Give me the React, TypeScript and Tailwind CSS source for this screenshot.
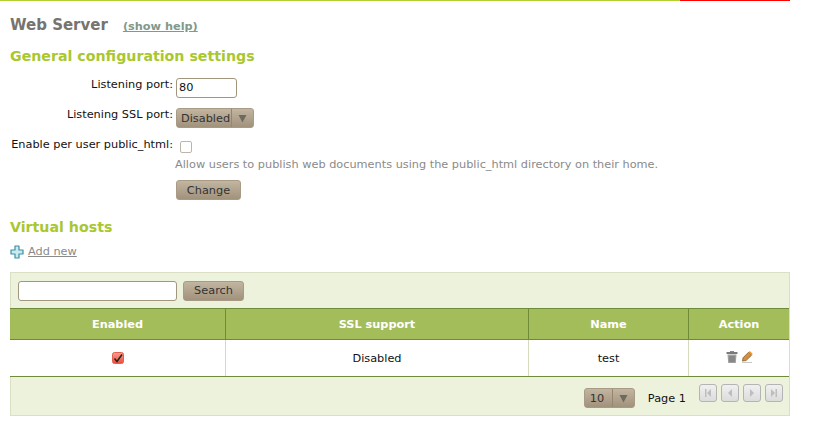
import React from "react";

const beige = "bg-gradient-to-b from-[#c2b5a1] to-[#a1927c]";

const Caret = () => (
  <svg width="9" height="9" viewBox="0 0 9 9" className="block">
    <path d="M0.5 1h8L4.5 8.5z" fill="#6f6a5e" />
  </svg>
);

const PageButton = ({ kind }: { kind: "first" | "prev" | "next" | "last" }) => (
  <div className="w-[18px] h-[18px] rounded-[3px] border border-[#b4b4b4] bg-gradient-to-b from-[#f0f0f0] to-[#dcdcdc] flex items-center justify-center">
    <svg width="8" height="10" viewBox="0 0 8 10">
      {kind === "first" && (
        <>
          <rect x="1" y="1" width="1.5" height="8" fill="#bdbdbd" />
          <path d="M7 1v8L3 5z" fill="#bdbdbd" />
        </>
      )}
      {kind === "prev" && <path d="M6 1v8L2 5z" fill="#bdbdbd" />}
      {kind === "next" && <path d="M2 1v8l4-4z" fill="#bdbdbd" />}
      {kind === "last" && (
        <>
          <rect x="5.5" y="1" width="1.5" height="8" fill="#bdbdbd" />
          <path d="M1 1v8l4-4z" fill="#bdbdbd" />
        </>
      )}
    </svg>
  </div>
);

const TrashIcon = () => (
  <svg width="12" height="12" viewBox="0 0 12 12" className="block">
    <rect x="4" y="0" width="4" height="1.5" fill="#888" />
    <rect x="0.5" y="1" width="11" height="2" rx="0.5" fill="#7a7a7a" />
    <path d="M1.5 3.5h9l-.7 8.5H2.2z" fill="#a0a0a0" />
    <path d="M4 5v6M6 5v6M8 5v6" stroke="#666" strokeWidth="0.8" />
  </svg>
);

const PencilIcon = () => (
  <svg width="11" height="12" viewBox="0 0 11 12" className="block">
    <path d="M0.5 10L1 6.8 6.6 1.2 9.6 4.2 4 9.6z" fill="#d08f42" stroke="#7d5018" strokeWidth="0.7" />
    <path d="M6.6 1.2L7.8 0l3 3L9.6 4.2z" fill="#f59320" />
    <rect x="0" y="11" width="10" height="1" fill="#c8c8c8" />
  </svg>
);

const PlusIcon = () => (
  <svg width="14" height="14" viewBox="0 0 14 14" className="block">
    <path
      d="M5 1h4v4h4v4H9v4H5V9H1V5h4z"
      fill="#c8eaf0"
      stroke="#3d8fa3"
      strokeWidth="1.2"
      strokeLinejoin="round"
    />
  </svg>
);

const RedCheck = () => (
  <svg width="12" height="12" viewBox="0 0 12 12" className="block">
    <defs>
      <linearGradient id="redBox" x1="0" y1="0" x2="0" y2="1">
        <stop offset="0" stopColor="#f9a090" />
        <stop offset="1" stopColor="#ee4a38" />
      </linearGradient>
    </defs>
    <rect x="0.5" y="0.5" width="11" height="11" rx="2" fill="url(#redBox)" stroke="#e2604e" />
    <path d="M2.5 6.5L5 9.5 10 2.5" fill="none" stroke="#222" strokeWidth="1.5" />
  </svg>
);

export default function App() {
  return (
    <div className="w-[815px] h-[429px] bg-white overflow-hidden font-['DejaVu_Sans',sans-serif] text-[11.3px] text-[#111]">
      {/* Top line */}
      <div className="w-[790px] h-px flex">
        <div className="w-[680px] bg-[#b1d132]" />
        <div className="flex-1 bg-[#ff0000]" />
      </div>

      <div className="w-[790px] pl-[10px]">
        {/* Title */}
        <div className="flex items-baseline mt-[15px] h-[19px]">
          <h1 className="text-[15px] leading-[19px] font-bold text-[#77736f]">Web Server</h1>
          <a className="ml-[15px] text-[11.3px] font-bold text-[#7f9a8a] underline">(show help)</a>
        </div>

        <h2 className="mt-[12px] text-[14.2px] leading-[18px] font-bold text-[#a9c72f]">
          General configuration settings
        </h2>

        {/* Config form */}
        <div className="mt-[13px] flex items-center h-[20px]">
          <label className="w-[163px] text-right -mt-[5px]">Listening port:</label>
          <div className="ml-[3px] w-[61px] h-[20px] border border-[#a3967e] rounded-[3px] px-[2px] pt-px flex items-center">
            80
          </div>
        </div>
        <div className="mt-[10px] flex items-center h-[20px]">
          <label className="w-[163px] text-right -mt-[5px]">Listening SSL port:</label>
          <div className={`ml-[3px] w-[78px] h-[20px] rounded-[3px] border border-[#a89a85] flex items-center text-[#333] ${beige}`}>
            <span className="w-[55px] pl-[4px] pt-px border-r border-[#94866f] leading-[17px]">Disabled</span>
            <span className="flex-1 flex justify-center"><Caret /></span>
          </div>
        </div>
        <div className="mt-[10px] flex items-center h-[16px]">
          <label className="w-[163px] text-right -mt-[2px]">Enable per user public_html:</label>
          <div className="ml-[7px] mt-[1px] w-[12px] h-[12px] border border-[#bdb6a8] rounded-[2px] bg-white" />
        </div>
        <p className="ml-[165px] mt-[4px] leading-[14px] text-[#8a8a8a]">
          Allow users to publish web documents using the public_html directory on their home.
        </p>
        <div className={`ml-[166px] mt-[8px] w-[65px] h-[20px] pt-[2px] rounded-[3px] border border-[#a89a85] flex items-center justify-center text-[#333] ${beige}`}>
          Change
        </div>

        <h2 className="mt-[18px] text-[14.2px] leading-[18px] font-bold text-[#a9c72f]">Virtual hosts</h2>

        <div className="mt-[9px] h-[14px] flex items-center gap-[4px]">
          <PlusIcon />
          <a className="text-[#8a8a8a] underline">Add new</a>
        </div>

        {/* Table wrapper */}
        <div className="mt-[13px] h-[144px] bg-[#edf2dd] border border-[#dbe0c4] flex flex-col">
          <div className="h-[35px] flex items-center pl-[7px] gap-[6px]">
            <div className="w-[159px] h-[20px] bg-white border border-[#a3967e] rounded-[3px]" />
            <div className={`w-[61px] h-[20px] pt-px rounded-[3px] border border-[#a89a85] flex items-center justify-center text-[#333] ${beige}`}>
              Search
            </div>
          </div>
          <div className="-ml-px grid grid-cols-[216px_303px_160px_1fr] h-[32px] bg-[#a4bd5b] border-y border-[#6f8a38] text-white font-bold">
            <div className="flex items-center justify-center pt-[2px] border-r border-[#6f8a38]">Enabled</div>
            <div className="flex items-center justify-center pt-[2px] border-r border-[#6f8a38]">SSL support</div>
            <div className="flex items-center justify-center pt-[2px] border-r border-[#6f8a38]">Name</div>
            <div className="flex items-center justify-center pt-[2px]">Action</div>
          </div>
          <div className="-ml-px grid grid-cols-[216px_303px_160px_1fr] h-[37px] bg-white border-b border-[#6f8a38]">
            <div className="flex items-center justify-center border-r border-[#d5d9bd]"><RedCheck /></div>
            <div className="flex items-center justify-center pt-[2px] border-r border-[#d5d9bd]">Disabled</div>
            <div className="flex items-center justify-center pt-[2px] border-r border-[#d5d9bd]">test</div>
            <div className="flex items-start justify-center gap-[4px] pt-[11px]">
              <TrashIcon />
              <PencilIcon />
            </div>
          </div>
          <div className="flex-1 flex items-center justify-end pr-[6px] pt-[4px]">
            <div className={`w-[51px] h-[20px] rounded-[3px] border border-[#a89a85] flex items-center text-[#333] ${beige}`}>
              <span className="w-[28px] pl-[5px] pt-px border-r border-[#94866f] leading-[17px]">10</span>
              <span className="flex-1 flex justify-center"><Caret /></span>
            </div>
            <span className="ml-[13px] mr-[13px] pt-[2px]">Page 1</span>
            <div className="flex gap-[4px] -mt-[10px]">
              <PageButton kind="first" />
              <PageButton kind="prev" />
              <PageButton kind="next" />
              <PageButton kind="last" />
            </div>
          </div>
        </div>
      </div>
    </div>
  );
}
